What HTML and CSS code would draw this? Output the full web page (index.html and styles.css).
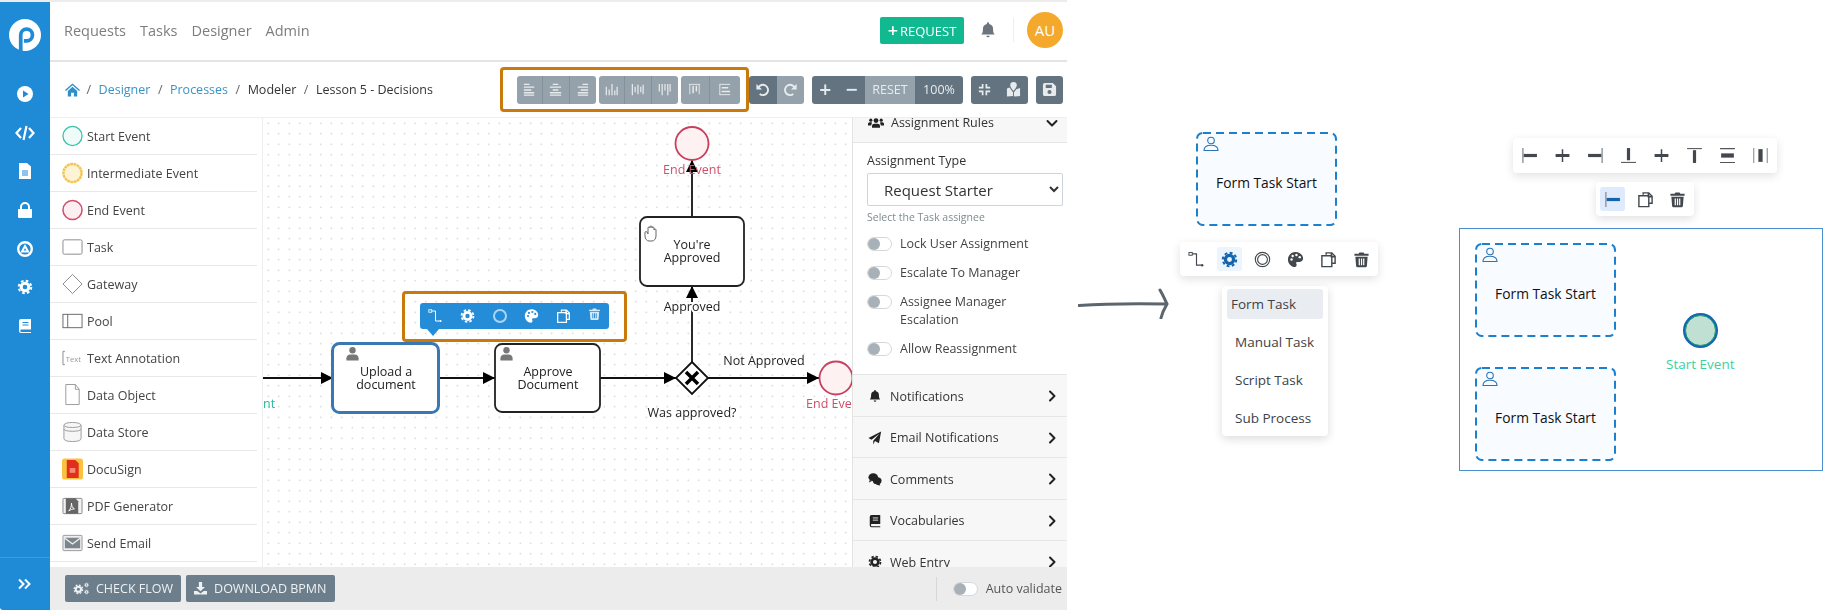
FILE: index.html
```html
<!DOCTYPE html>
<html lang="en">
<head>
    <meta charset="UTF-8">
    <title>Modeler - Lesson 5 - Decisions</title>
    <link rel="stylesheet" href="styles.css">
</head>
<body>
<!-- shared icons -->
<svg class="sprite" xmlns="http://www.w3.org/2000/svg">
    <symbol id="i-gear" viewBox="0 0 20 20"><circle cx="10" cy="10" r="4.8" fill="none" stroke="currentColor" stroke-width="3.8"/><circle cx="10" cy="10" r="7.9" fill="none" stroke="currentColor" stroke-width="2.4" stroke-dasharray="3.4 2.8"/></symbol>
    <symbol id="i-book" viewBox="0 0 16 16"><path fill="currentColor" d="M4 1h10v10.5H4.5a1.2 1.2 0 0 0 0 2.5H14v1H4a2 2 0 0 1-2-2V3a2 2 0 0 1 2-2z"/><path stroke="var(--dot,#1f8ad6)" d="M5.5 4.5h6M5.5 7h6"/></symbol>
    <symbol id="i-bell" viewBox="0 0 16 16"><path fill="currentColor" d="M8 1a1 1 0 0 1 1 1v.6A4.5 4.5 0 0 1 12.5 7c0 3 .6 4 1.5 5H2c.9-1 1.5-2 1.5-5A4.5 4.5 0 0 1 7 2.6V2a1 1 0 0 1 1-1zM6.5 13h3a1.5 1.5 0 0 1-3 0z"/></symbol>
    <symbol id="i-person" viewBox="0 0 16 16"><circle cx="8" cy="4" r="3.4" fill="currentColor"/><path fill="currentColor" d="M1.5 15v-2.5C1.5 10 3.5 8.5 5.500 8.5h5c2 0 4 1.500 4 4V15z"/></symbol>
    <symbol id="i-person-line" viewBox="0 0 16 16"><circle cx="8" cy="4.5" r="3.3" fill="none" stroke="currentColor" stroke-width="1.1"/><path fill="none" stroke="currentColor" stroke-width="1.1" d="M1 14.500c0-3.500 3-5.200 7-5.200s7 1.700 7 5.200z"/></symbol>
    <symbol id="i-conn" viewBox="0 0 18 18"><rect x="1" y="1.500" width="3.500" height="3" fill="none" stroke="currentColor"/><path fill="none" stroke="currentColor" stroke-width="1.200" d="M4.500 3H9v12h5"/><circle cx="15" cy="15" r="1.300" fill="currentColor"/></symbol>
    <symbol id="i-ring" viewBox="0 0 18 18"><circle cx="9" cy="9" r="7.600" fill="none" stroke="currentColor" stroke-width="1.200"/><circle cx="9" cy="9" r="5.200" fill="none" stroke="currentColor" stroke-width="1.200"/></symbol>
    <symbol id="i-palette" viewBox="0 0 18 18"><path fill="currentColor" d="M9 1c4.500 0 8 3 8 6.800 0 2.700-2 3.900-4 3.900h-2c-1.300 0-1.600 1-1.100 1.900.5 1 .5 3.400-1.400 3.400C4.500 17 1 13.500 1 9s3.500-8 8-8z"/><g fill="var(--dot,#fff)"><circle cx="4.800" cy="9" r="1.300"/><circle cx="6" cy="5.300" r="1.300"/><circle cx="10" cy="4.200" r="1.300"/><circle cx="13.500" cy="6.500" r="1.300"/></g></symbol>
    <symbol id="i-copy" viewBox="0 0 18 18"><path fill="none" stroke="currentColor" stroke-width="1.500" d="M6.500 4V2h6l3.500 3.500V13h-3.500M12 2v4h4M2 5h10.500v11.500H2z"/></symbol>
    <symbol id="i-trash" viewBox="0 0 18 18"><path fill="currentColor" fill-rule="evenodd" d="M1.500 3H6l.8-1.500h4.400L12 3h4.500v2h-15zM2.500 6h13l-.8 10a1.500 1.500 0 0 1-1.500 1.300H4.800a1.500 1.500 0 0 1-1.500-1.300zM6 8v7h1.300V8zm2.400 0v7h1.300V8zm2.300 0v7H12V8z"/></symbol>
    <symbol id="i-chev" viewBox="0 0 12 12"><path fill="none" stroke="currentColor" stroke-width="2" stroke-linecap="round" stroke-linejoin="round" d="M4 1.500 8.500 6 4 10.500"/></symbol>
    <symbol id="i-left" viewBox="0 0 16 16"><path stroke="currentColor" stroke-width="1.500" d="M2 2.500h6M2 5.500h11M2 8.500h8M2 11.500h11M2 14h11"/></symbol>
    <symbol id="i-center" viewBox="0 0 16 16"><path stroke="currentColor" stroke-width="1.500" d="M5 2.500h6M2 5.500h12M5 8.500h6M2 11.500h12M2 14h12"/></symbol>
    <symbol id="i-right" viewBox="0 0 16 16"><path stroke="currentColor" stroke-width="1.500" d="M8 2.500h6M3 5.500h11M6 8.500h8M3 11.500h11M3 14h11"/></symbol>
    <symbol id="i-bottom" viewBox="0 0 16 16"><path stroke="currentColor" stroke-width="1.300" d="M2.500 14V5M5.500 14V8M8.500 14V2M11.500 14V9M14 14V5"/></symbol>
    <symbol id="i-middle" viewBox="0 0 16 16"><path stroke="currentColor" stroke-width="1.300" d="M2.500 2v12M5.500 5v6M8.500 3v10M11.500 5v6M14 3v10"/></symbol>
    <symbol id="i-top" viewBox="0 0 16 16"><path stroke="currentColor" stroke-width="1.300" d="M2.500 2v8M5.500 2v12M8.500 2v7M11.500 2v12M14 2v8"/></symbol>
    <symbol id="i-hdist" viewBox="0 0 16 16"><path stroke="currentColor" stroke-width="1" d="M2 2.500h12M3 3v10M13 3v10"/><path stroke="currentColor" stroke-width="1.600" d="M6.500 4v8M10 4v6"/></symbol>
    <symbol id="i-vdist" viewBox="0 0 16 16"><path stroke="currentColor" stroke-width="1" d="M3 2v12M3 2.500h11M3 13.500h11"/><path stroke="currentColor" stroke-width="1.600" d="M5 6h7M5 10h9"/></symbol>
    <symbol id="i-undo" viewBox="0 0 16 16"><path fill="none" stroke="currentColor" stroke-width="2" d="M3.500 6A5.500 5.500 0 1 1 5 12.800"/><path fill="currentColor" d="M1.500 2v6h6z"/></symbol>
    <symbol id="i-redo" viewBox="0 0 16 16"><path fill="none" stroke="currentColor" stroke-width="2" d="M12.500 6A5.500 5.500 0 1 0 11 12.800"/><path fill="currentColor" d="M14.500 2v6h-6z"/></symbol>
    <symbol id="i-fit" viewBox="0 0 16 16"><path fill="none" stroke="currentColor" stroke-width="1.800" d="M6 2v4H2M10 2v4h4M6 14v-4H2M10 14v-4h4"/></symbol>
    <symbol id="i-map" viewBox="0 0 16 16"><path fill="currentColor" d="M8 0a3.500 3.500 0 0 1 3.500 3.500C11.500 6 8 9.500 8 9.500S4.500 6 4.500 3.500A3.500 3.500 0 0 1 8 0zM1 7l3-1.200 1 2L7.500 11v4L1 15.500zM15 6.500V15l-6.500.5V11L11 7.800z"/></symbol>
    <symbol id="i-save" viewBox="0 0 16 16"><path fill="currentColor" fill-rule="evenodd" d="M3 1h8.500L15 4.500V13a2 2 0 0 1-2 2H3a2 2 0 0 1-2-2V3a2 2 0 0 1 2-2zm1 2v3.500h6.500V3zm4 5.500a2.200 2.200 0 1 0 0 4.400 2.200 2.200 0 0 0 0-4.400z"/></symbol>
    <symbol id="i-users" viewBox="0 0 20 14"><circle cx="10" cy="4" r="3" fill="currentColor"/><circle cx="3.500" cy="3.500" r="2" fill="currentColor"/><circle cx="16.500" cy="3.500" r="2" fill="currentColor"/><path fill="currentColor" d="M5 13v-2c0-2 1.500-3 3-3h4c1.500 0 3 1 3 3v2zM0 10V8c0-1 1-2 2-2h3L4 10zM20 10V8c0-1-1-2-2-2h-3l1 4z"/></symbol>
    <symbol id="i-plane" viewBox="0 0 16 16"><path fill="currentColor" d="M15 .5 12.500 14 8 11.500 6 15.500V11L13 3 4 10 .5 8z"/></symbol>
    <symbol id="i-chat" viewBox="0 0 16 16"><ellipse cx="6" cy="6" rx="5.500" ry="4.500" fill="currentColor"/><path fill="currentColor" d="M2 9 1 12l4-2zM9 14.500l5 1-1-3z"/><ellipse cx="10.500" cy="10" rx="5" ry="4" fill="currentColor"/></symbol>
    <symbol id="i-cogs" viewBox="0 0 22 16"><use href="#i-gear" x="0" y="2" width="14" height="14"/><use href="#i-gear" x="14" y="0" width="7" height="7"/><use href="#i-gear" x="14" y="9" width="7" height="7"/></symbol>
    <symbol id="i-download" viewBox="0 0 16 16"><path fill="currentColor" d="M6 0h4v6h3.500L8 11.500 2.500 6H6zM0 11h4l4 3 4-3h4v4.500H0z"/></symbol>
    <symbol id="i-bar-left" viewBox="0 0 16 16"><path fill="#9aa0a6" d="M1 1h1.500v14H1z"/><path fill="currentColor" d="M2.500 6.500H15v3H2.500z"/></symbol>
    <symbol id="i-bar-center" viewBox="0 0 16 16"><path fill="currentColor" d="M1.500 6.500h13v3h-13zM7.300 2h1.400v12H7.300z"/></symbol>
    <symbol id="i-bar-right" viewBox="0 0 16 16"><path fill="#9aa0a6" d="M13.500 1H15v14h-1.500z"/><path fill="currentColor" d="M1 6.500h12.500v3H1z"/></symbol>
    <symbol id="i-bar-bottom" viewBox="0 0 16 16"><path fill="currentColor" d="M6.500 1h3v11.500h-3z"/><path fill="#555" d="M1 14h14v1H1z"/></symbol>
    <symbol id="i-bar-top" viewBox="0 0 16 16"><path fill="currentColor" d="M6.500 3h3v12h-3z"/><path fill="#555" d="M1 1h14v1H1z"/></symbol>
    <symbol id="i-bar-mid" viewBox="0 0 16 16"><path fill="#555" d="M1 1h14v1H1zM1 14h14v1H1z"/><path fill="currentColor" d="M2 6h12v4H2z"/></symbol>
    <symbol id="i-bar-dist" viewBox="0 0 16 16"><path fill="#9aa0a6" d="M1 1h1.200v14H1zM13.800 1H15v14h-1.200z"/><path fill="currentColor" d="M6 2h4v12H6z"/></symbol>
    <symbol id="i-frame" viewBox="0 0 141 94"><rect x="1" y="1" width="139" height="92" rx="6" fill="#f8fbff" stroke="#1c80cc" stroke-width="2" stroke-dasharray="8 5"/></symbol>
</svg>

<div class="app">
    <nav class="sidebar">
        <svg class="logo" viewBox="0 0 30 30"><circle cx="15" cy="15" r="15" fill="#fff"/><path fill="none" stroke="#1f8ad6" stroke-width="3.500" d="M11 30V15a5.500 5.500 0 1 1 5.500 5.500H14"/></svg>
        <ul class="side-icons">
            <li><svg viewBox="0 0 16 16"><circle cx="8" cy="8" r="8" fill="#fff"/><path fill="#1f8ad6" d="M6 4.500v7L11.500 8z"/></svg></li>
            <li><svg class="ic-code" viewBox="0 0 20 16"><path fill="none" stroke="#fff" stroke-width="2.200" d="M6 3 1.500 8 6 13M14 3l4.500 5-4.500 5M11.500 1 8.500 15"/></svg></li>
            <li><svg viewBox="0 0 16 16"><path fill="#fff" d="M2 0h8l4 3.500V16H2z"/><path stroke="#1f8ad6" d="M5 8h6M5 10h6M5 12h6"/></svg></li>
            <li><svg viewBox="0 0 16 16"><path fill="#fff" d="M1 7h14v8a1 1 0 0 1-1 1H2a1 1 0 0 1-1-1z"/><path fill="none" stroke="#fff" stroke-width="2" d="M4 7V5a4 4 0 0 1 8 0v2"/></svg></li>
            <li><svg viewBox="0 0 16 16"><circle cx="8" cy="8" r="6.800" fill="none" stroke="#fff" stroke-width="2.400"/><path fill="none" stroke="#fff" stroke-width="2" d="M8 5 11 10.500H5z"/></svg></li>
            <li><svg class="ic-white"><use href="#i-gear"/></svg></li>
            <li><svg class="ic-white"><use href="#i-book"/></svg></li>
        </ul>
        <div class="side-toggle"><svg viewBox="0 0 14 12"><path fill="none" stroke="#fff" stroke-width="2" d="M1 1.500 5.500 6 1 10.500M7 1.500 11.500 6 7 10.500"/></svg></div>
    </nav>

    <div class="main">
        <header class="topnav">
            <a>Requests</a>
            <a>Tasks</a>
            <a>Designer</a>
            <a>Admin</a>
            <button class="btn-request"><span class="plus">+</span>REQUEST</button>
            <svg class="bell"><use href="#i-bell"/></svg>
            <div class="avatar">AU</div>
        </header>

        <div class="crumbbar">
            <svg class="home" viewBox="0 0 16 14"><path fill="#2f8fc9" d="M8 0 16 7l-1 1-7-6-7 6-1-1zM3 8l5-4.500L13 8v6H9.500v-4h-3v4H3z"/></svg>
            <span class="sep">/</span><a class="crumb-link">Designer</a>
            <span class="sep">/</span><a class="crumb-link">Processes</a>
            <span class="sep">/</span><span>Modeler</span>
            <span class="sep">/</span><span>Lesson 5 - Decisions</span>
            <div class="toolbars">
                <div class="mark-top">
                    <div class="group">
                        <button class="tb"><svg><use href="#i-left"/></svg></button>
                        <button class="tb"><svg><use href="#i-center"/></svg></button>
                        <button class="tb"><svg><use href="#i-right"/></svg></button>
                    </div>
                    <div class="group">
                        <button class="tb"><svg><use href="#i-bottom"/></svg></button>
                        <button class="tb"><svg><use href="#i-middle"/></svg></button>
                        <button class="tb"><svg><use href="#i-top"/></svg></button>
                    </div>
                    <div class="group">
                        <button class="tb tb-wide"><svg><use href="#i-hdist"/></svg></button>
                        <button class="tb tb-wide"><svg><use href="#i-vdist"/></svg></button>
                    </div>
                </div>
                <div class="group undo-group">
                    <button class="tb dark"><svg><use href="#i-undo"/></svg></button>
                    <button class="tb"><svg><use href="#i-redo"/></svg></button>
                </div>
                <div class="group zoom-group">
                    <button class="tb dark sign">+</button>
                    <button class="tb dark sign">&minus;</button>
                    <button class="tb reset">RESET</button>
                    <button class="tb dark pct">100%</button>
                </div>
                <div class="group fit-group">
                    <button class="tb dark"><svg><use href="#i-fit"/></svg></button>
                    <button class="tb dark"><svg><use href="#i-map"/></svg></button>
                </div>
                <div class="group save-group">
                    <button class="tb dark"><svg><use href="#i-save"/></svg></button>
                </div>
            </div>
        </div>

        <div class="work">
            <ul class="palette">
                <li><svg viewBox="0 0 22 22"><circle cx="11" cy="11" r="10" fill="#effbf9" stroke="#35c3a4" stroke-width="1.300"/></svg>Start Event</li>
                <li><svg viewBox="0 0 22 22"><circle cx="11" cy="11" r="9.500" fill="#fff3d6" stroke="#f2c552" stroke-width="2.500" stroke-dasharray="3 .5"/></svg>Intermediate Event</li>
                <li><svg viewBox="0 0 22 22"><circle cx="11" cy="11" r="10" fill="#fdeff1" stroke="#d0506a" stroke-width="1.600"/></svg>End Event</li>
                <li><svg viewBox="0 0 22 22"><rect x="1" y="3.500" width="20" height="15" rx="1.500" fill="#fff" stroke="#888"/></svg>Task</li>
                <li><svg viewBox="0 0 22 22"><path fill="#fff" stroke="#888" d="M11 1 21 11 11 21 1 11z"/></svg>Gateway</li>
                <li><svg viewBox="0 0 22 22"><rect x="1" y="4" width="20" height="14" fill="#fff" stroke="#666"/><path stroke="#666" d="M6 4v14"/></svg>Pool</li>
                <li><svg viewBox="0 0 22 22"><path fill="none" stroke="#888" d="M3 4H1v14h2"/><text x="4" y="15" class="mini">Text</text></svg>Text Annotation</li>
                <li><svg viewBox="0 0 22 22"><path fill="#fff" stroke="#999" d="M4 0h10l4 5v16H4zM14 0v5h4"/></svg>Data Object</li>
                <li><svg viewBox="0 0 22 22"><path fill="#f6f6f6" stroke="#999" d="M2 4c0-4 18-4 18 0v14c0 4-18 4-18 0z"/><path fill="none" stroke="#999" d="M2 4c0 3 18 3 18 0M2 8c0 3 18 3 18 0"/></svg>Data Store</li>
                <li><svg viewBox="0 0 22 22"><rect width="22" height="22" rx="3" fill="#fbc23f"/><path fill="#e22e1c" d="M5 1.500h9l3.500 3.500v15.500H5z"/><rect x="8" y="10" width="6" height="5" fill="#f58a70"/></svg>DocuSign</li>
                <li><svg viewBox="0 0 22 22"><rect x="1" y="3" width="20" height="16" rx="1" fill="#f1f1f1" stroke="#888"/><path fill="#666" d="M4 3h10l3 3v13H4z"/><path fill="none" stroke="#fff" d="M7 16c2-1 3-5 3-8 0 3 1 5 3 6-2 0-4 1-6 2z"/></svg>PDF Generator</li>
                <li><svg viewBox="0 0 22 22"><rect x="1" y="3" width="20" height="16" rx="1" fill="#eee" stroke="#999"/><rect x="3" y="5.500" width="16" height="11" fill="#7a858c"/><path fill="none" stroke="#eee" stroke-width="1.500" d="M3 6l8 6 8-6"/></svg>Send Email</li>
            </ul>

            <div class="canvas">
                <svg class="diagram" viewBox="263 118 589 449">
                    <defs>
                        <marker id="head" viewBox="0 0 10 10" refX="10" refY="5" markerWidth="12" markerHeight="12" markerUnits="userSpaceOnUse" orient="auto"><path d="M0 0 10 5 0 10z" fill="#000"/></marker>
                    </defs>
                    <g class="flows">
                        <path marker-end="url(#head)" d="M263 378H333"/>
                        <path marker-end="url(#head)" d="M439 378H495"/>
                        <path marker-end="url(#head)" d="M600 378H676"/>
                        <path marker-end="url(#head)" d="M708 378H819"/>
                        <path marker-end="url(#head)" d="M692 362V286"/>
                        <path marker-end="url(#head)" d="M692 217V160"/>
                    </g>
                    <circle cx="692" cy="143.500" r="16.500" class="end"/>
                    <circle cx="836" cy="378" r="16.500" class="end"/>
                    <rect x="332.500" y="343.500" width="106" height="69" rx="7" class="task selected"/>
                    <rect x="495" y="344" width="105" height="68" rx="7" class="task"/>
                    <rect x="640" y="217" width="104" height="69" rx="7" class="task"/>
                    <path class="gate" d="M692 362 708 378 692 394 676 378z"/>
                    <path class="gate-x" d="M686 372 698 384M698 372 686 384"/>
                    <use href="#i-person" x="345" y="346" width="15" height="16" class="person"/>
                    <use href="#i-person" x="499" y="346" width="15" height="16" class="person"/>
                    <path class="hand" d="M645 232v4c0 3 2 5 4 5h3c2 0 4-2 4-5v-6c0-1.500-2-1.500-2 0v-2c0-1.500-2-1.500-2 0v-1c0-1.500-2-1.500-2 0v1c0-1.500-2-1.500-2 0v6l-1-2c-1-1-2 0-2 0z"/>
                    <text x="386" y="376">Upload a</text>
                    <text x="386" y="389">document</text>
                    <text x="548" y="376">Approve</text>
                    <text x="548" y="389">Document</text>
                    <text x="692" y="249">You're</text>
                    <text x="692" y="262">Approved</text>
                    <text x="692" y="311" class="on-white">Approved</text>
                    <text x="764" y="365">Not Approved</text>
                    <text x="692" y="417">Was approved?</text>
                    <text x="692" y="174" class="red">End Event</text>
                    <text x="835" y="408" class="red">End Event</text>
                    <text x="263" y="408" class="green left">nt</text>
                </svg>
                <div class="mark-flow">
                    <div class="flowbar">
                        <svg><use href="#i-conn"/></svg>
                        <svg><use href="#i-gear"/></svg>
                        <svg class="ring"><circle cx="8" cy="8" r="6" fill="none" stroke="#a9d6f5" stroke-width="2"/></svg>
                        <svg><use href="#i-palette"/></svg>
                        <svg><use href="#i-copy"/></svg>
                        <svg class="bar-trash"><use href="#i-trash"/></svg>
                    </div>
                </div>
            </div>

            <aside class="panel">
                <div class="acc acc-open"><svg class="acc-ic"><use href="#i-users"/></svg>Assignment Rules<svg class="chev down"><use href="#i-chev"/></svg></div>
                <div class="panel-body">
                    <label class="field-label">Assignment Type</label>
                    <select class="field"><option>Request Starter</option></select>
                    <small class="hint">Select the Task assignee</small>
                    <div class="switch-row"><span class="switch"></span><span>Lock User Assignment</span></div>
                    <div class="switch-row"><span class="switch"></span><span>Escalate To Manager</span></div>
                    <div class="switch-row"><span class="switch"></span><span>Assignee Manager Escalation</span></div>
                    <div class="switch-row"><span class="switch"></span><span>Allow Reassignment</span></div>
                </div>
                <div class="acc"><svg class="acc-ic"><use href="#i-bell"/></svg>Notifications<svg class="chev"><use href="#i-chev"/></svg></div>
                <div class="acc"><svg class="acc-ic"><use href="#i-plane"/></svg>Email Notifications<svg class="chev"><use href="#i-chev"/></svg></div>
                <div class="acc"><svg class="acc-ic"><use href="#i-chat"/></svg>Comments<svg class="chev"><use href="#i-chev"/></svg></div>
                <div class="acc"><svg class="acc-ic"><use href="#i-book"/></svg>Vocabularies<svg class="chev"><use href="#i-chev"/></svg></div>
                <div class="acc"><svg class="acc-ic"><use href="#i-gear"/></svg>Web Entry<svg class="chev"><use href="#i-chev"/></svg></div>
            </aside>
        </div>

        <footer class="footer">
            <button class="btn-foot"><svg class="cogs"><use href="#i-cogs"/></svg>CHECK FLOW</button>
            <button class="btn-foot"><svg class="dl"><use href="#i-download"/></svg>DOWNLOAD BPMN</button>
            <div class="validate"><span class="switch"></span><span>Auto validate</span></div>
        </footer>
    </div>
</div>

<div class="notes">
    <svg class="hand-arrow" viewBox="0 0 92 32"><path fill="none" stroke="#5c666e" stroke-width="3" stroke-linecap="round" d="M1 18.500C30 16.500 60 16.500 88 17M82 3c3 5 5 10 7 14-3 5-5 10-6 14"/></svg>

    <div class="note-col">
        <div class="ftask ftask-solo">
            <svg class="ftask-frame"><use href="#i-frame"/></svg>
            <svg class="ftask-user"><use href="#i-person-line"/></svg>
            <span>Form Task Start</span>
        </div>
        <div class="card-bar">
            <span class="bar-btn"><svg><use href="#i-conn"/></svg></span>
            <span class="bar-btn active"><svg><use href="#i-gear"/></svg></span>
            <span class="bar-btn"><svg><use href="#i-ring"/></svg></span>
            <span class="bar-btn"><svg><use href="#i-palette"/></svg></span>
            <span class="bar-btn"><svg><use href="#i-copy"/></svg></span>
            <span class="bar-btn"><svg><use href="#i-trash"/></svg></span>
        </div>
        <ul class="type-menu">
            <li class="current">Form Task</li>
            <li>Manual Task</li>
            <li>Script Task</li>
            <li>Sub Process</li>
        </ul>
    </div>

    <div class="note-col note-wide">
        <div class="card-bar bar-align">
            <span class="bar-btn"><svg><use href="#i-bar-left"/></svg></span>
            <span class="bar-btn"><svg><use href="#i-bar-center"/></svg></span>
            <span class="bar-btn"><svg><use href="#i-bar-right"/></svg></span>
            <span class="bar-btn"><svg><use href="#i-bar-bottom"/></svg></span>
            <span class="bar-btn"><svg><use href="#i-bar-center"/></svg></span>
            <span class="bar-btn"><svg><use href="#i-bar-top"/></svg></span>
            <span class="bar-btn"><svg><use href="#i-bar-mid"/></svg></span>
            <span class="bar-btn"><svg><use href="#i-bar-dist"/></svg></span>
        </div>
        <div class="card-bar bar-multi">
            <span class="bar-btn active-strong"><svg><use href="#i-bar-left"/></svg></span>
            <span class="bar-btn"><svg><use href="#i-copy"/></svg></span>
            <span class="bar-btn"><svg><use href="#i-trash"/></svg></span>
        </div>
        <div class="select-box">
            <div class="select-tasks">
                <div class="ftask">
                    <svg class="ftask-frame"><use href="#i-frame"/></svg>
                    <svg class="ftask-user"><use href="#i-person-line"/></svg>
                    <span>Form Task Start</span>
                </div>
                <div class="ftask">
                    <svg class="ftask-frame"><use href="#i-frame"/></svg>
                    <svg class="ftask-user"><use href="#i-person-line"/></svg>
                    <span>Form Task Start</span>
                </div>
            </div>
            <div class="start-event">
                <span class="start-dot"></span>
                <span>Start Event</span>
            </div>
        </div>
    </div>
</div>
</body>
</html>
```

FILE: styles.css
```css
* {
    box-sizing: border-box;
}
body {
    margin: 0;
    width: 1823px;
    height: 610px;
    overflow: hidden;
    display: flex;
    background-color: #ffffff;
    font-family: 'Open Sans', 'Noto Sans', sans-serif;
    font-size: 12.5px;
    color: #333;
}
ul {
    list-style: none;
    margin: 0;
    padding: 0;
}
button {
    font-family: inherit;
    border: 0;
    padding: 0;
}
.sprite {
    display: none;
}

/* left: the recorded modeler app */
.app {
    width: 1067px;
    height: 610px;
    flex: none;
    display: flex;
    border-top: 2px solid #ececec;
    filter: blur(0.45px);
}
.sidebar {
    width: 50px;
    flex: none;
    display: flex;
    flex-direction: column;
    align-items: center;
    background-color: #1f8ad6;
    border-bottom-left-radius: 3px;
}
.logo {
    width: 32px;
    height: 32px;
    margin-top: 17px;
}
.side-icons {
    margin-top: 35px;
    display: flex;
    flex-direction: column;
    align-items: center;
    gap: 22.7px;
}
.side-icons li {
    height: 16px;
}
.side-icons svg {
    width: 16px;
    height: 16px;
    display: block;
}
.side-icons .ic-code {
    width: 20px;
}
.ic-white {
    color: #ffffff;
    --dot: #1f8ad6;
}
.side-toggle {
    margin-top: auto;
    width: 100%;
    height: 53px;
    border-top: 1px solid #3d9bdd;
    display: flex;
    align-items: center;
    justify-content: center;
}
.side-toggle svg {
    width: 14px;
    height: 12px;
}
.main {
    flex: 1;
    min-width: 0;
    display: flex;
    flex-direction: column;
}
.topnav {
    height: 60px;
    flex: none;
    display: flex;
    align-items: center;
    padding: 0 4px 2px 14px;
    gap: 14px;
    border-bottom: 2px solid #e4e4e4;
    font-size: 14.5px;
    color: #7d7d7d;
}
.btn-request {
    margin-left: auto;
    width: 84px;
    height: 27px;
    background-color: #10b98f;
    color: #ffffff;
    font-size: 13px;
    border-radius: 2px;
}
.plus {
    font-size: 18px;
    font-weight: 600;
    line-height: 1;
    margin-right: 2px;
    vertical-align: -1px;
}
.bell {
    width: 18px;
    height: 22px;
    margin-left: 1px;
    color: #6c757d;
}
.avatar {
    width: 36px;
    height: 36px;
    margin-left: 16px;
    border-radius: 50%;
    background-color: #f5a92c;
    color: #ffffff;
    font-size: 15px;
    display: flex;
    align-items: center;
    justify-content: center;
    position: relative;
}
.avatar::before {
    content: "";
    position: absolute;
    left: -14px;
    top: 6px;
    height: 24px;
    border-left: 1px solid #eeeeee;
}
.crumbbar {
    height: 56px;
    flex: none;
    display: flex;
    align-items: center;
    padding: 0 4px 0 15px;
    gap: 7.5px;
    color: #333;
    border-bottom: 1px solid #eeeeee;
}
.home {
    width: 15px;
    height: 14px;
    margin-right: -1px;
}
.crumb-link {
    color: #3a93c6;
}
.sep {
    color: #666;
}
.toolbars {
    margin-left: auto;
    display: flex;
    align-items: center;
}
.mark-top {
    width: 249px;
    height: 45px;
    display: flex;
    align-items: center;
    gap: 2.5px;
    padding-left: 13.5px;
    border: 3.5px solid #c97a0b;
    border-radius: 4px;
}
.group {
    display: flex;
    height: 28px;
    border-radius: 3px;
    overflow: hidden;
}
.tb {
    width: 26.5px;
    height: 28px;
    background-color: #95a2ab;
    color: #e8ebed;
    border-right: 1px solid #84919a;
    display: flex;
    align-items: center;
    justify-content: center;
}
.tb:last-child {
    border-right: 0;
}
.tb svg {
    width: 15px;
    height: 15px;
}
.tb-wide {
    width: 29.5px;
}
.tb.dark {
    background-color: #637480;
    border-right-color: #637480;
}
.undo-group .tb {
    width: 27.5px;
    border: 0;
}
.zoom-group {
    margin-left: 8px;
}
.sign {
    font-size: 21px;
    font-weight: 600;
    line-height: 1;
    border: 0;
}
.reset {
    width: 50px;
    border: 0;
    font-size: 12.5px;
}
.pct {
    width: 48px;
    font-size: 12.5px;
}
.fit-group {
    margin-left: 8px;
}
.fit-group .tb {
    width: 28.5px;
}
.save-group {
    margin-left: 8px;
}
.save-group .tb {
    width: 27px;
}
.work {
    flex: 1;
    min-height: 0;
    display: flex;
}
.palette {
    width: 213px;
    flex: none;
    padding-right: 5px;
    border-right: 1px solid #eeeeee;
}
.palette li {
    height: 37px;
    display: flex;
    align-items: center;
    gap: 4px;
    padding-left: 12px;
    border-bottom: 1px solid #e8e8e8;
    color: #444;
}
.palette svg {
    width: 21px;
    height: 22px;
    flex: none;
}
.mini {
    font-size: 8px;
    fill: #999;
}
.canvas {
    position: relative;
    width: 589px;
    flex: none;
    overflow: hidden;
    background-color: #ffffff;
    background-image: radial-gradient(circle, #c9c9c9 0.8px, transparent 1px);
    background-size: 10.5px 10.5px;
}
.diagram {
    display: block;
    width: 589px;
    height: 449px;
}
.diagram text {
    font-size: 12.5px;
    fill: #222;
    text-anchor: middle;
}
.diagram text.on-white {
    paint-order: stroke;
    stroke: #ffffff;
    stroke-width: 4px;
}
.diagram text.red {
    fill: #d0506a;
}
.diagram text.green {
    fill: #2bb99a;
}
.diagram text.left {
    text-anchor: start;
}
.flows path {
    fill: none;
    stroke: #111;
    stroke-width: 1.8;
}
.end {
    fill: #fdf1f2;
    stroke: #c9405f;
    stroke-width: 1.8;
}
.task {
    fill: #ffffff;
    stroke: #222;
    stroke-width: 1.8;
}
.selected {
    stroke: #3a78b4;
    stroke-width: 3;
}
.gate {
    fill: #ffffff;
    stroke: #111;
    stroke-width: 1.8;
}
.gate-x {
    fill: none;
    stroke: #000;
    stroke-width: 3.5;
}
.person {
    color: #777;
}
.hand {
    fill: #ffffff;
    stroke: #666;
    stroke-width: 1;
}
.mark-flow {
    position: absolute;
    left: 139px;
    top: 173px;
    width: 225px;
    height: 51px;
    padding: 8.5px 0 0 14.5px;
    border: 3.5px solid #c97a0b;
    border-radius: 4px;
}
.flowbar {
    position: relative;
    width: 189px;
    height: 26px;
    display: flex;
    align-items: center;
    justify-content: space-between;
    padding: 0 8px;
    background-color: #258cd8;
    border-radius: 3px;
    color: #ffffff;
    --dot: #258cd8;
}
.flowbar::after {
    content: "";
    position: absolute;
    left: 7px;
    top: 26px;
    border: 6px solid transparent;
    border-top: 7px solid #258cd8;
    border-bottom: 0;
}
.flowbar svg {
    width: 15px;
    height: 16px;
}
.flowbar .bar-trash {
    color: #d6ebfa;
    width: 13px;
    height: 14px;
    margin-bottom: 3px;
}
.panel {
    flex: 1;
    min-width: 0;
    overflow: hidden;
    border-left: 1px solid #e2e2e2;
    display: flex;
    flex-direction: column;
}
.acc {
    height: 41.5px;
    flex: none;
    display: flex;
    align-items: center;
    padding: 2px 9px 0 15px;
    background-color: #f7f7f7;
    border-top: 1px solid #e6e6e6;
    color: #333;
}
.acc-open {
    height: 25px;
    border-top: 0;
    border-bottom: 1px solid #e6e6e6;
    padding-top: 0;
    padding-bottom: 15px;
}
.acc-ic {
    width: 14px;
    height: 14px;
    margin-right: 8px;
    color: #222;
    --dot: #f7f7f7;
}
.acc-open .acc-ic {
    width: 16px;
    height: 12px;
    margin-right: 7px;
}
.chev {
    margin-left: auto;
    width: 12px;
    height: 12px;
    color: #222;
}
.down {
    transform: rotate(90deg);
}
.panel-body {
    height: 231px;
    flex: none;
    padding: 9px 4px 0 14px;
}
.field-label {
    display: block;
    line-height: 17px;
}
.field {
    display: block;
    width: 196px;
    height: 33px;
    margin-top: 4px;
    padding-left: 12px;
    border: 1px solid #ced4da;
    border-radius: 2px;
    background-color: #ffffff;
    font-family: inherit;
    font-size: 15px;
    color: #333;
}
.hint {
    display: block;
    margin-top: 4px;
    line-height: 14px;
    font-size: 10.5px;
    color: #7c8c8f;
}
.switch-row {
    display: flex;
    align-items: flex-start;
    gap: 8px;
    width: 190px;
    margin-top: 11px;
    line-height: 18px;
    color: #444;
}
.switch {
    width: 25px;
    height: 14px;
    flex: none;
    margin-top: 2px;
    position: relative;
    border: 1px solid #d4d8db;
    border-radius: 8px;
    background-color: #ffffff;
}
.switch::before {
    content: "";
    position: absolute;
    left: 0;
    top: 0;
    width: 12px;
    height: 12px;
    border-radius: 50%;
    background-color: #a8b1b7;
}
.footer {
    height: 43px;
    flex: none;
    display: flex;
    align-items: center;
    gap: 5px;
    padding: 0 5px 0 15px;
    background-color: #ececec;
}
.btn-foot {
    height: 27px;
    padding: 0 8px;
    display: flex;
    align-items: center;
    gap: 7px;
    background-color: #6c7e8b;
    color: #eef1f3;
    font-size: 12.5px;
    border-radius: 2px;
}
.cogs {
    width: 17px;
    height: 13px;
    margin-right: -1px;
    --dot: #6c7e8b;
}
.dl {
    width: 13px;
    height: 13px;
}
.validate {
    margin-left: auto;
    height: 24px;
    display: flex;
    align-items: center;
    gap: 8px;
    padding-left: 16px;
    border-left: 1px solid #d8d8d8;
    color: #555;
}
.validate .switch {
    margin-top: 0;
}

/* right: the explanatory sketches */
.notes {
    flex: 1;
    min-width: 0;
    display: flex;
    align-items: flex-start;
    font-size: 13px;
}
.hand-arrow {
    width: 92px;
    height: 32px;
    flex: none;
    margin: 287px 0 0 11px;
}
.note-col {
    width: 198px;
    flex: none;
    margin-left: 10px;
    padding-top: 132px;
}
.note-wide {
    width: 364px;
    margin-left: 81px;
    padding-top: 138px;
}
.ftask {
    position: relative;
    width: 141px;
    height: 94px;
    flex: none;
    display: flex;
    align-items: center;
    justify-content: center;
    color: #111;
    font-weight: 500;
    font-size: 13.8px;
}
.ftask span {
    position: relative;
    top: 3px;
}
.ftask-solo {
    margin-left: 16px;
}
.ftask-frame {
    position: absolute;
    left: 0;
    top: 0;
    width: 141px;
    height: 94px;
}
.ftask-user {
    position: absolute;
    left: 7px;
    top: 4px;
    width: 16px;
    height: 16px;
    color: #2a74b5;
}
.card-bar {
    display: flex;
    height: 34px;
    margin-top: 16px;
    background-color: #ffffff;
    border-radius: 4px;
    box-shadow: 0 3px 10px rgba(0, 0, 0, 0.12);
    color: #42484d;
    --dot: #ffffff;
}
.bar-btn {
    width: 33px;
    display: flex;
    align-items: center;
    justify-content: center;
    position: relative;
}
.bar-btn svg {
    width: 17px;
    height: 17px;
    position: relative;
}
.active::before,
.active-strong::before {
    content: "";
    position: absolute;
    left: 4px;
    top: 5px;
    width: 25px;
    height: 24px;
    border-radius: 3px;
    background-color: #ecf4fd;
}
.active-strong::before {
    background-color: #dfeafd;
}
.active,
.active-strong {
    color: #1464ad;
    --dot: #ecf4fd;
}
.bar-align {
    width: 264px;
    height: 35px;
    margin: 0 0 0 54px;
}
.bar-multi {
    width: 98px;
    margin: 9px 0 0 137px;
}
.type-menu {
    width: 106px;
    margin: 10px 0 0 42px;
    padding: 3px 5px;
    display: flex;
    flex-direction: column;
    gap: 8px;
    background-color: #ffffff;
    border-radius: 4px;
    box-shadow: 0 3px 10px rgba(0, 0, 0, 0.14);
    font-size: 13.5px;
    color: #3c4248;
}
.type-menu li {
    height: 30px;
    line-height: 30px;
    padding-left: 8px;
    white-space: nowrap;
}
.type-menu .current {
    padding-left: 4px;
    background-color: #e9edf2;
    border-radius: 3px;
}
.select-box {
    width: 364px;
    height: 243px;
    margin-top: 12px;
    padding: 14px 0 0 15px;
    display: flex;
    border: 1px solid #4a90d0;
}
.select-tasks {
    display: flex;
    flex-direction: column;
    gap: 30px;
}
.start-event {
    margin: 72px 0 0 50px;
    display: flex;
    flex-direction: column;
    align-items: center;
    gap: 9px;
    color: #3ecfa0;
    font-size: 13.5px;
    height: 60px;
}
.start-dot {
    width: 31px;
    height: 31px;
    flex: none;
    border-radius: 50%;
    background-color: #bfe0d2;
    border: 1px solid #1aa06a;
    box-shadow: 0 0 0 2px #1565b0;
}
```
